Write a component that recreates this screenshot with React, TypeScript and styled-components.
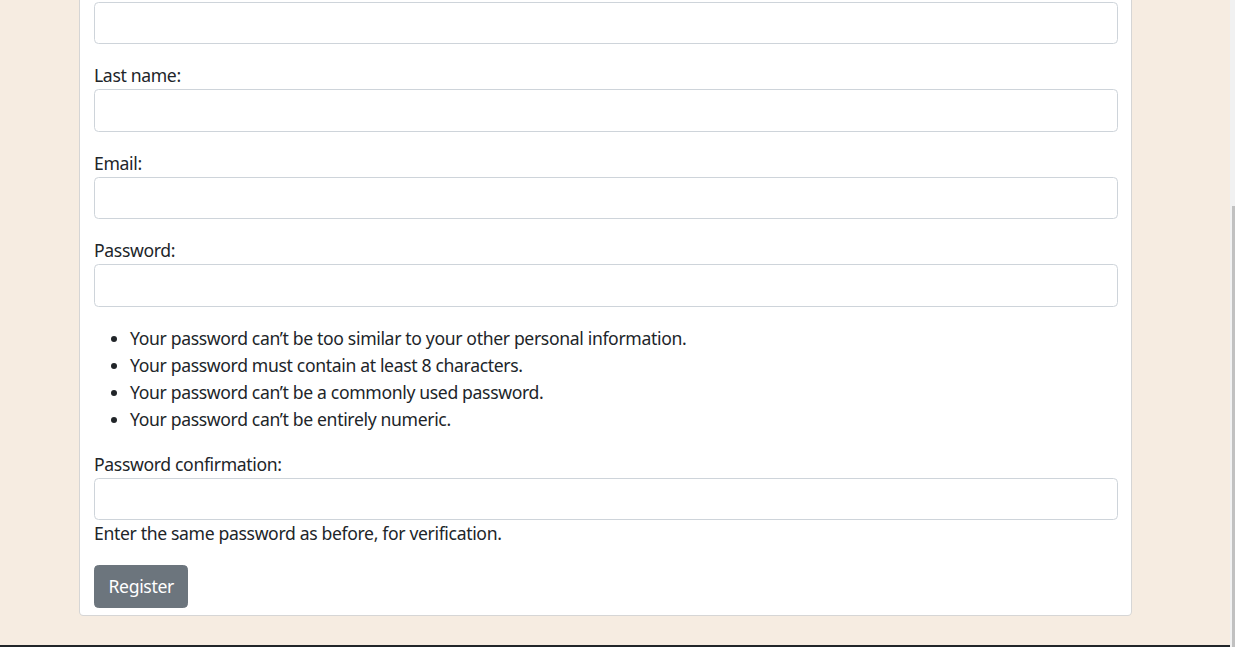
import React from "react";
import styled, { createGlobalStyle } from "styled-components";

const GlobalStyle = createGlobalStyle`
  html, body {
    margin: 0;
    padding: 0;
    height: 647px;
    overflow: hidden;
    background: #f6ece1;
  }
  body {
    font-family: "Noto Sans", "Open Sans", sans-serif;
    font-size: 17.6px;
    line-height: 27px;
    letter-spacing: -0.35px;
    color: #212529;
  }
  * { box-sizing: border-box; }
`;

const Page = styled.div`
  display: flex;
  flex-direction: column;
  width: calc(100% - 5px);
  height: 647px;
`;

const Main = styled.main`
  flex: 1;
  padding-left: 79px;
`;

const Card = styled.section`
  width: 1053px;
  background: #ffffff;
  border: 1px solid rgba(0, 0, 0, 0.16);
  border-top: none;
  border-radius: 0 0 4.5px 4.5px;
  padding: 1.5px 13px 7.5px 14px;
`;

const Form = styled.form`
  display: flex;
  flex-direction: column;
`;

const Field = styled.p`
  margin: 0 0 18px;
`;

const Label = styled.label`
  display: block;
  height: 27px;
`;

const Input = styled.input`
  display: block;
  width: 100%;
  height: 42.5px;
  margin: 0;
  padding: 6.75px 13.5px;
  font: inherit;
  background: #ffffff;
  border: 1px solid #ced4da;
  border-radius: 4.5px;
  outline: none;
`;

const HelpList = styled.ul`
  margin: 0 0 18px;
  padding-left: 36px;
`;

const HelpItem = styled.li`
  line-height: 27px;
`;

const HelpText = styled.span`
  display: block;
`;

const Actions = styled.div`
  display: flex;
`;

const Button = styled.button`
  font: inherit;
  letter-spacing: inherit;
  color: #ffffff;
  background: #6c757d;
  border: 1px solid #6c757d;
  border-radius: 4.5px;
  padding: 6.75px 13.5px;
  line-height: 27px;
  cursor: pointer;
`;

const Footer = styled.footer`
  height: 2px;
  background: #212529;
`;

const ScrollTrack = styled.div`
  position: fixed;
  top: 0;
  right: 0;
  width: 5px;
  height: 647px;
  background: #f1f1f1;
`;

const ScrollThumb = styled.div`
  position: absolute;
  top: 206px;
  right: 0;
  width: 3.3px;
  bottom: 0;
  background: #c1c1c1;
`;

const fields = [
  { id: "last_name", label: "Last name:", type: "text" },
  { id: "email", label: "Email:", type: "email" },
];

const passwordRules = [
  "Your password can’t be too similar to your other personal information.",
  "Your password must contain at least 8 characters.",
  "Your password can’t be a commonly used password.",
  "Your password can’t be entirely numeric.",
];

export default function App() {
  return (
    <>
      <GlobalStyle />
      <Page>
        <Main>
          <Card>
            <Form onSubmit={(e) => e.preventDefault()}>
              <Field>
                <Input id="first_name" type="text" />
              </Field>
              {fields.map((f) => (
                <Field key={f.id}>
                  <Label htmlFor={f.id}>{f.label}</Label>
                  <Input id={f.id} type={f.type} />
                </Field>
              ))}
              <Field>
                <Label htmlFor="password1">Password:</Label>
                <Input id="password1" type="password" />
              </Field>
              <HelpList>
                {passwordRules.map((r) => (
                  <HelpItem key={r}>{r}</HelpItem>
                ))}
              </HelpList>
              <Field>
                <Label htmlFor="password2">Password confirmation:</Label>
                <Input id="password2" type="password" />
                <HelpText>Enter the same password as before, for verification.</HelpText>
              </Field>
              <Actions>
                <Button type="submit">Register</Button>
              </Actions>
            </Form>
          </Card>
        </Main>
        <Footer />
      </Page>
      <ScrollTrack>
        <ScrollThumb />
      </ScrollTrack>
    </>
  );
}
